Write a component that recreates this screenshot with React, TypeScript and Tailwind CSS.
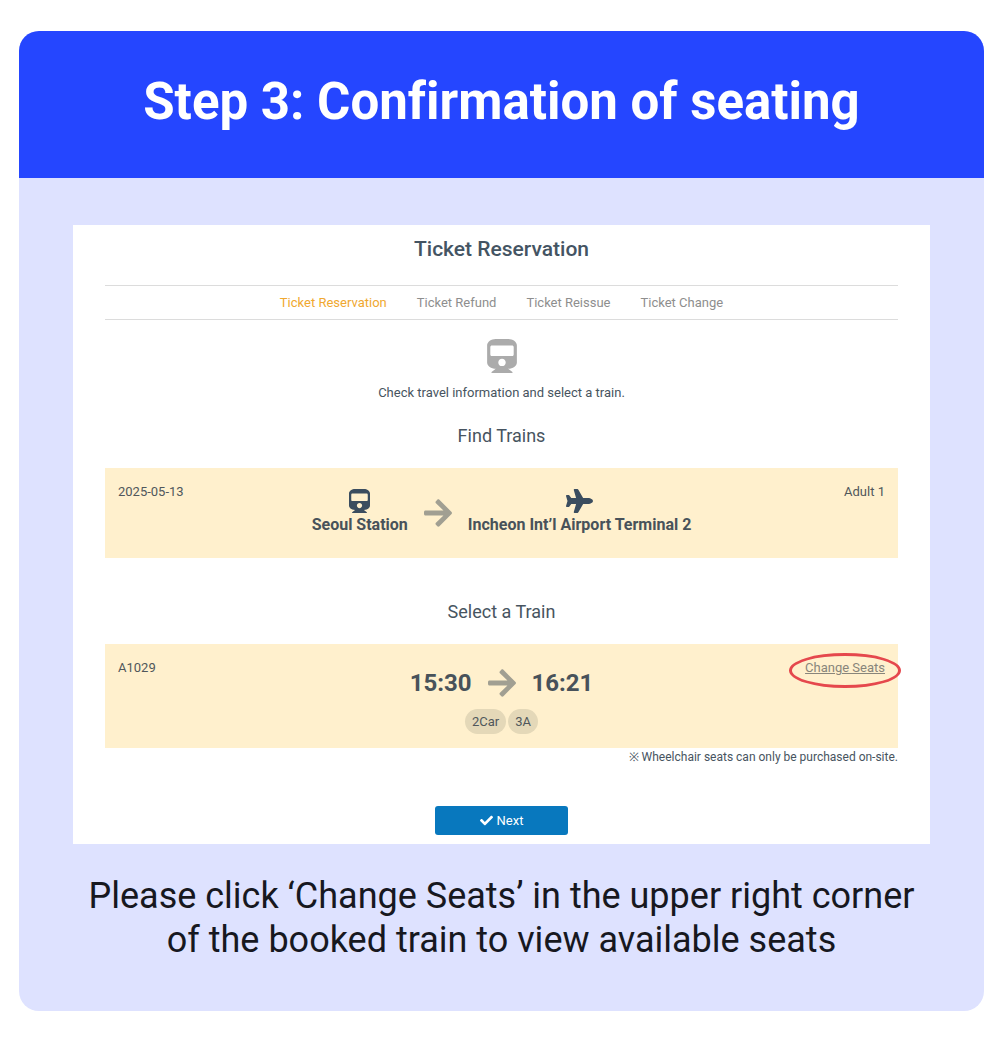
import type { ReactNode } from "react";
import { FaArrowRight, FaCheck, FaPlane, FaTrain } from "react-icons/fa";

const tabs = [
  "Ticket Reservation",
  "Ticket Refund",
  "Ticket Reissue",
  "Ticket Change",
];

const seats = ["2Car", "3A"];

interface TripCardProps {
  left: string;
  right: ReactNode;
  children: ReactNode;
}

const TripCard = ({ left, right, children }: TripCardProps) => (
  <div className="grid grid-cols-[1fr_auto_1fr] bg-[#fff0cd] px-[13px] text-[#50575b]">
    <p className="pt-[14px] leading-5">{left}</p>
    {children}
    <div className="pt-[14px] text-right leading-5">{right}</div>
  </div>
);

const Arrow = () => (
  <FaArrowRight className="h-8 w-7 shrink-0 text-[#a19f92]" />
);

interface StationProps {
  icon: ReactNode;
  name: string;
}

const Station = ({ icon, name }: StationProps) => (
  <div className="flex flex-col items-center text-[#3b4d5f]">
    {icon}
    <p className="text-base leading-6 font-bold text-[#48525a]">{name}</p>
  </div>
);

const ReservationPanel = () => (
  <section className="bg-white px-8 pb-[9px] text-[13px] text-[#475460]">
    <h2 className="pt-2 text-center text-[21px] leading-8 font-medium text-[#445463]">
      Ticket Reservation
    </h2>
    <nav className="mt-5 flex justify-center gap-[30px] border-y border-[#dcdcdc] pt-[7px] pb-[6px]">
      {tabs.map((tab, i) => (
        <a
          key={tab}
          href="#"
          className={
            i === 0 ? "leading-5 text-[#f0a830]" : "leading-5 text-[#8e8e8e]"
          }
        >
          {tab}
        </a>
      ))}
    </nav>

    <div className="flex flex-col items-center pt-[19px]">
      <FaTrain className="h-[34px] w-[30px] text-[#ababab]" />
      <p className="mt-[10px] leading-5">
        Check travel information and select a train.
      </p>
    </div>

    <h3 className="mt-[21px] mb-5 text-center text-lg leading-6">
      Find Trains
    </h3>
    <TripCard left="2025-05-13" right="Adult 1">
      <div className="flex items-center gap-4 pt-[21px] pb-[21px]">
        <Station
          icon={<FaTrain className="h-6 w-[21px]" />}
          name="Seoul Station"
        />
        <Arrow />
        <Station
          icon={<FaPlane className="h-6 w-[27px]" />}
          name="Incheon Int’l Airport Terminal 2"
        />
      </div>
    </TripCard>

    <h3 className="mt-[42px] mb-5 text-center text-lg leading-6">
      Select a Train
    </h3>
    <TripCard
      left="A1029"
      right={
        <a href="#" className="relative inline-block text-[#88857b] underline">
          Change Seats
          <span className="absolute -inset-x-4 -top-[5px] -bottom-[10px] rounded-[50%] border-3 border-[#e5484d]" />
        </a>
      }
    >
      <div className="flex flex-col items-center pt-[23px] pb-[14px]">
        <div className="flex items-center gap-4 text-2xl leading-8 font-bold text-[#48525a]">
          <span>15:30</span>
          <Arrow />
          <span>16:21</span>
        </div>
        <div className="mt-[10px] flex gap-[2px]">
          {seats.map((seat) => (
            <span
              key={seat}
              className="rounded-full bg-[#e4d8b8] px-[7px] leading-[25px]"
            >
              {seat}
            </span>
          ))}
        </div>
      </div>
    </TripCard>
    <p className="text-right text-xs leading-[18px]">
      ※ Wheelchair seats can only be purchased on-site.
    </p>

    <button
      type="button"
      className="mx-auto mt-10 flex h-[29px] w-[133px] items-center justify-center gap-1 rounded-[3px] bg-[#0878be] text-white"
    >
      <FaCheck className="size-[13px]" />
      Next
    </button>
  </section>
);

export default function App() {
  return (
    <main className="bg-white pt-[31px] pr-4 pb-8 pl-[19px] font-[Roboto,sans-serif]">
      <article className="overflow-hidden rounded-[20px] bg-[#dee2ff]">
        <h1 className="bg-[#2546ff] pt-[39px] pb-[44px] text-center text-[51px] leading-[64px] font-bold text-white [font-variant-ligatures:none]">
          Step 3: Confirmation of seating
        </h1>
        <div className="px-[54px] pt-[47px] pb-[49px]">
          <ReservationPanel />
          <p className="mt-[30px] text-center text-[36px] leading-[44px] text-[#17181f]">
            Please click ‘Change Seats’ in the upper right corner
            <br />
            of the booked train to view available seats
          </p>
        </div>
      </article>
    </main>
  );
}
